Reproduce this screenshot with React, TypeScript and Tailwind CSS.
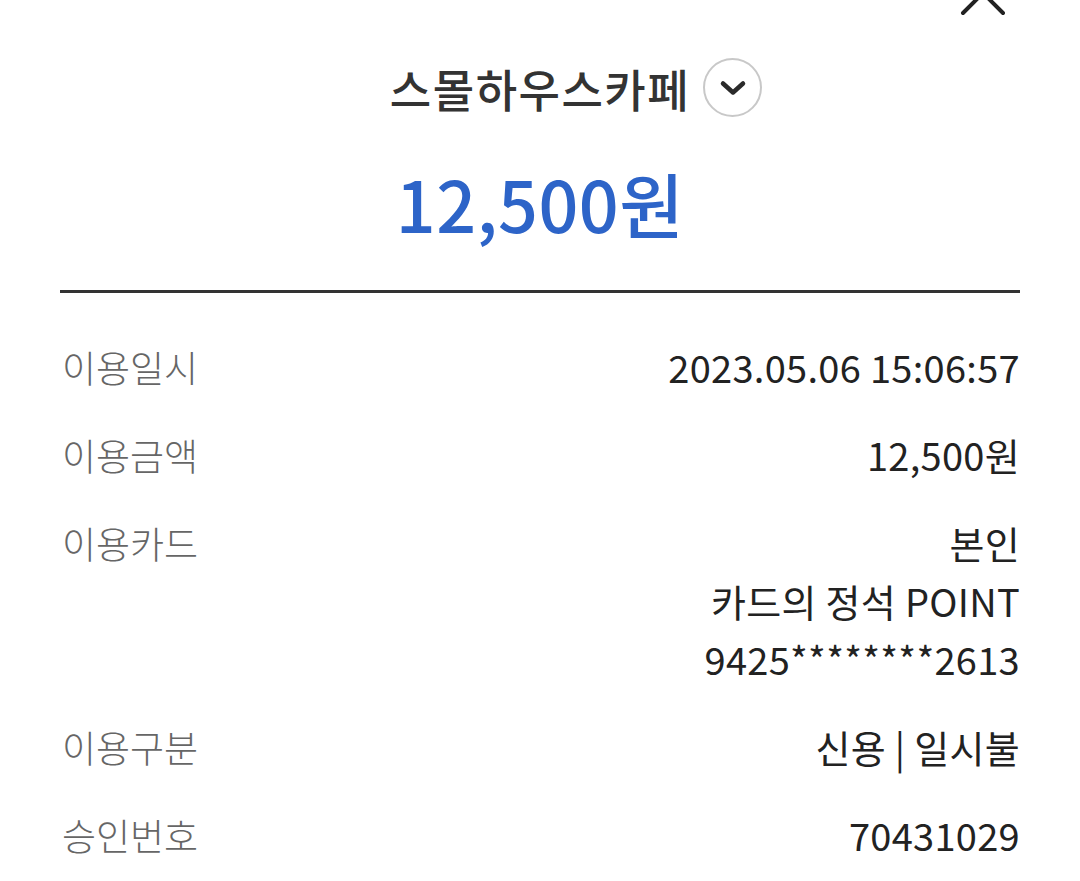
const rows: { label: string; values: string[] }[] = [
  { label: '이용일시', values: ['2023.05.06 15:06:57'] },
  { label: '이용금액', values: ['12,500원'] },
  { label: '이용카드', values: ['본인', '카드의 정석 POINT', '9425********2613'] },
  { label: '이용구분', values: ['신용 | 일시불'] },
  { label: '승인번호', values: ['70431029'] },
];

export default function App() {
  return (
    <div
      className="relative w-[1080px] h-[881px] overflow-hidden bg-white"
      style={{ fontFamily: '"Noto Sans CJK KR", "Noto Sans", sans-serif' }}
    >
      {/* Close button (cut off at top) */}
      <svg className="absolute left-[958px] top-[-32px] w-[50px] h-[50px]" viewBox="0 0 50 50">
        <path d="M5 5 L45 45 M45 5 L5 45" stroke="#222" strokeWidth="4" strokeLinecap="round" />
      </svg>

      {/* Header */}
      <div className="flex flex-col items-center pt-[59px]">
        <div className="relative">
          <h1 className="text-[45px] leading-[60px] font-medium text-[#333] tracking-[1.5px]">스몰하우스카페</h1>
          {/* expand toggle sits beside the centered title */}
          <div className="absolute left-[calc(100%+13px)] top-[-1px] w-[59px] h-[59px] rounded-full border-2 border-[#c8c8c8] flex items-center justify-center">
            <svg viewBox="0 0 30 20" className="w-[30px] h-[20px]">
              <path d="M5 5.5 L15 14.5 L25 5.5" fill="none" stroke="#2a2a2a" strokeWidth="4.5" strokeLinecap="round" strokeLinejoin="round" />
            </svg>
          </div>
        </div>
        <div className="mt-[42px] text-[70px] leading-[84px] font-medium text-[#2d64c8] tracking-[0.5px]">12,500원</div>
      </div>

      {/* Divider */}
      <div className="mx-[60px] mt-[45px] h-[3px] bg-[#333]" />

      {/* Detail rows */}
      <div className="mx-[60px] mt-[45px] flex flex-col gap-[30px]">
        {rows.map((r) => (
          <div key={r.label} className="flex justify-between">
            <div className="text-[37px] leading-[58px] font-light text-[#666] pl-[2px]">{r.label}</div>
            <div className="flex flex-col items-end">
              {r.values.map((v) => (
                <div key={v} className="text-[38px] leading-[58px] text-[#222] tracking-[0.3px]">{v}</div>
              ))}
            </div>
          </div>
        ))}
      </div>
    </div>
  );
}
